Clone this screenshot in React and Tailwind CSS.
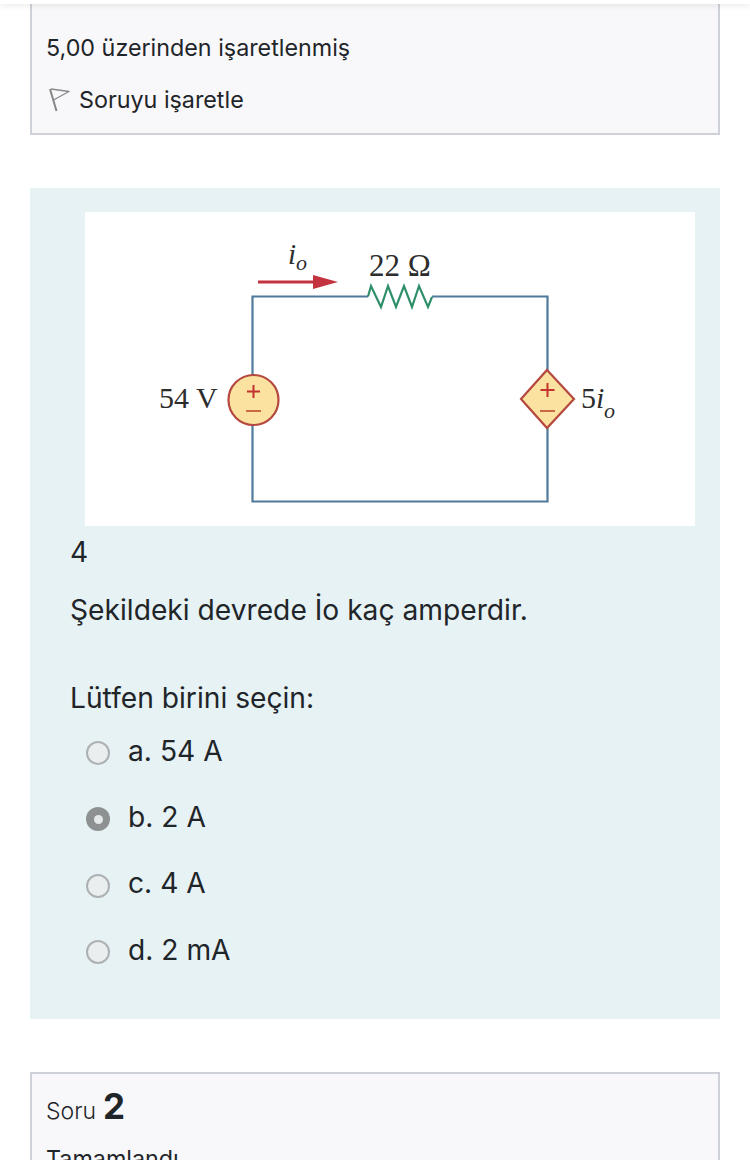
const options = [
  { label: 'a. 54 A', checked: false },
  { label: 'b. 2 A', checked: true },
  { label: 'c. 4 A', checked: false },
  { label: 'd. 2 mA', checked: false },
];

const FlagIcon = () => (
  <svg width="22" height="26" viewBox="0 0 22 26" fill="none">
    <path d="M1 2 L7.5 24" stroke="#858585" strokeWidth="2" />
    <path d="M2 2 L20 4.5 L4.5 13" stroke="#8a8a8a" strokeWidth="1.4" strokeLinejoin="round" />
  </svg>
);

const Circuit = () => (
  <svg width="610" height="314" viewBox="0 0 610 314" className="block">
    <path d="M167.5 175V84.5H283M347 84.5H462.5V160M462.5 216V289.5H167.5V201" fill="none" stroke="#4f7a9c" strokeWidth="2.2" />
    <path d="M283 84.5L286 74L296 95L303 74L311 95L319 74L327 95L334 74L343 95L347 85" fill="none" stroke="#2e8f68" strokeWidth="2.2" />
    <path d="M173 70H235" stroke="#c4343f" strokeWidth="3" />
    <path d="M228 63L253 70L228 77Z" fill="#c4343f" />
    <circle cx="168.5" cy="188" r="25" fill="#fbe2a0" stroke="#b5483f" strokeWidth="2.2" />
    <path d="M168.5 173V186M162 179.5H175" stroke="#c4332f" strokeWidth="2" />
    <path d="M161 199H176" stroke="#c96a45" strokeWidth="2" />
    <path d="M462 158L489 187L462 216L436 187Z" fill="#fbe2a0" stroke="#b5483f" strokeWidth="2.2" />
    <path d="M462.5 171V185M455.5 178H469.5" stroke="#c4332f" strokeWidth="2" />
    <path d="M455 199H470" stroke="#c96a45" strokeWidth="2" />
    <g fontFamily="'Liberation Serif', serif" fill="#2d2d2d">
      <text x="74" y="196" fontSize="30">54 V</text>
      <text x="284" y="64" fontSize="31">22 Ω</text>
      <text x="203" y="52" fontSize="29" fontStyle="italic">i</text>
      <text x="211" y="58" fontSize="22" fontStyle="italic">o</text>
      <text x="496" y="196" fontSize="30">5<tspan fontStyle="italic">i</tspan></text>
      <text x="519" y="206" fontSize="22" fontStyle="italic">o</text>
    </g>
  </svg>
);

const App = () => {
  return (
    <div className="h-[1160px] w-[750px] overflow-hidden bg-white font-['Inter',sans-serif] text-[#1f2529]">
      <div className="h-1 bg-white shadow-[0_1px_6px_rgba(0,0,0,0.12)] relative" />

      <div className="mx-[30px] h-[131px] border-2 border-t-0 border-[#ced1d8] bg-[#f8f8fa] px-[15px] pt-[29px]">
        <p className="-ml-px text-[23.3px] leading-[30px]">5,00 üzerinden işaretlenmiş</p>
        <div className="mt-[22px] ml-[2px] flex items-center gap-2 text-[23.3px] leading-[30px]">
          <FlagIcon />
          <span>Soruyu işaretle</span>
        </div>
      </div>

      <div className="mx-[30px] mt-[53px] h-[831px] bg-[#e6f2f4] pt-6">
        <div className="ml-[55px] w-[610px] bg-white">
          <Circuit />
        </div>
        <div className="px-10 text-[28.2px]">
          <p className="mt-2 leading-[36px]">4</p>
          <p className="mt-[22px] leading-[36px]">Şekildeki devrede İo kaç amperdir.</p>
          <p className="mt-[52px] leading-[36px]">Lütfen birini seçin:</p>
          <div className="mt-[17px] flex flex-col gap-[30.3px]">
            {options.map((o) => (
              <div key={o.label} className="flex h-9 items-center gap-[18px] pl-4">
                {o.checked ? (
                  <span className="mt-1 flex h-6 w-6 items-center justify-center rounded-full bg-[#8e9192]">
                    <span className="h-[9px] w-[9px] rounded-full bg-[#e4e8e9]" />
                  </span>
                ) : (
                  <span className="mt-1 h-6 w-6 rounded-full border-2 border-[#adb1b3] bg-[#ebeeef]" />
                )}
                <span>{o.label}</span>
              </div>
            ))}
          </div>
        </div>
      </div>

      <div className="mx-[30px] mt-[53px] h-[200px] border-2 border-[#ced1d8] bg-[#f8f8fa] px-[15px] pt-[12px]">
        <p className="-ml-px flex items-baseline gap-[7px] text-[23px] leading-[40px]">
          <span className="font-light">Soru</span>
          <span className="text-[35px] font-bold">2</span>
        </p>
        <p className="mt-[13px] -ml-px text-[23.3px] leading-[30px]">Tamamlandı</p>
      </div>
    </div>
  );
};

export default App;
